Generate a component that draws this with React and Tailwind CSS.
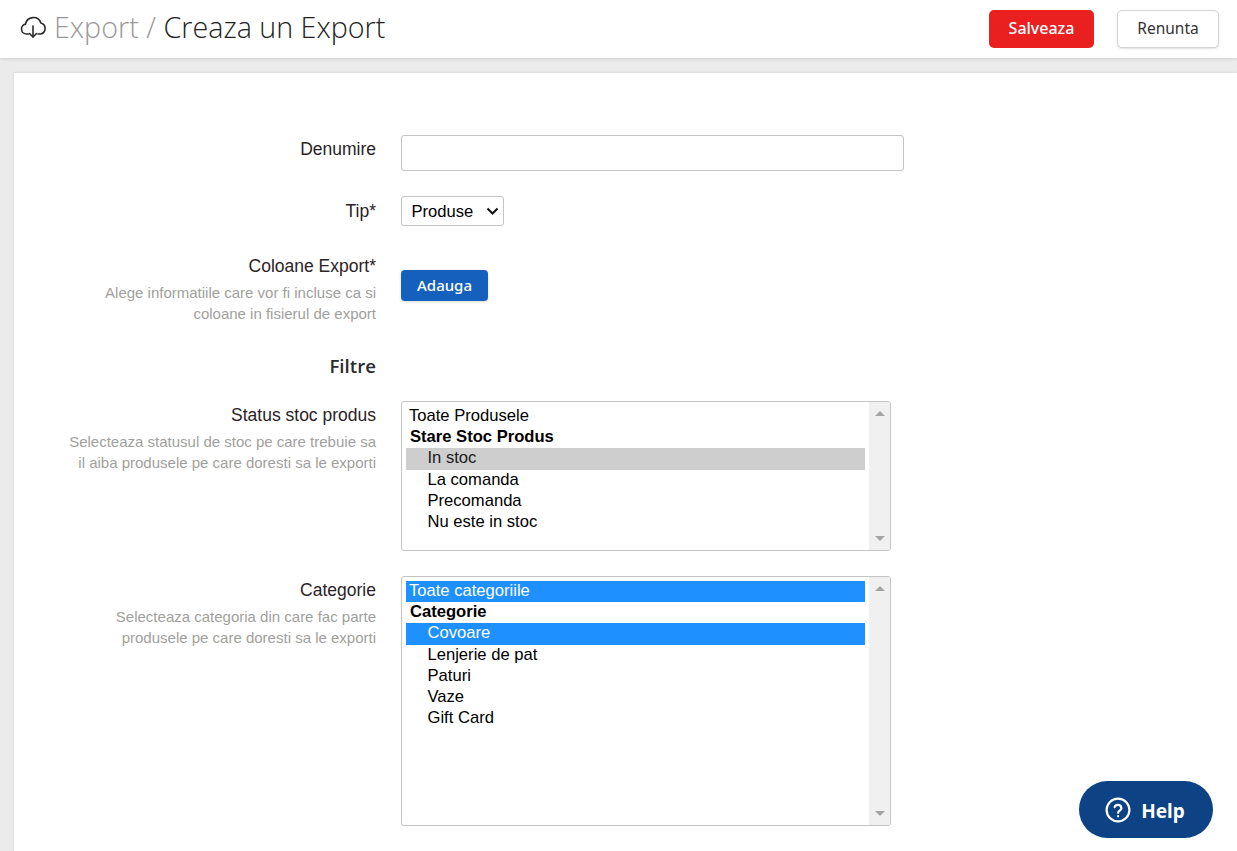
const arial = "font-['Liberation_Sans',Arial,sans-serif]";

const statusOptions = [
  { label: "Toate Produsele", type: "plain" },
  { label: "Stare Stoc Produs", type: "group" },
  { label: "In stoc", type: "child", state: "gray" },
  { label: "La comanda", type: "child" },
  { label: "Precomanda", type: "child" },
  { label: "Nu este in stoc", type: "child" },
];

const categoryOptions = [
  { label: "Toate categoriile", type: "plain", state: "blue" },
  { label: "Categorie", type: "group" },
  { label: "Covoare", type: "child", state: "blue" },
  { label: "Lenjerie de pat", type: "child" },
  { label: "Paturi", type: "child" },
  { label: "Vaze", type: "child" },
  { label: "Gift Card", type: "child" },
];

const ListOption = ({ option }) => {
  let color = "text-black";
  if (option.state === "gray") color = "bg-[#cecece] text-[#1a1a1a]";
  if (option.state === "blue") color = "bg-[#1e90ff] text-white";

  let indent = "pl-[3px]";
  if (option.type === "group") indent = "pl-1 font-bold";
  if (option.type === "child") indent = "pl-[21.5px]";

  return <div className={`h-[21.2px] leading-[20px] whitespace-nowrap ${indent} ${color}`}>{option.label}</div>;
};

const ListBox = ({ options, height }) => (
  <div className={`w-[490px] ${height} flex border border-[#c4c4c4] rounded-[3px] bg-white overflow-hidden ${arial} text-[16.6px]`}>
    <div className="flex-1 pl-1 pr-1 pt-[4px]">
      {options.map((option) => (
        <ListOption key={option.label} option={option} />
      ))}
    </div>
    <div className="w-[21px] bg-[#f0f0f0] flex flex-col items-center justify-between py-[9px]">
      <div className="w-0 h-0 border-x-[5px] border-x-transparent border-b-[5px] border-b-[#a3a3a3]"></div>
      <div className="w-0 h-0 border-x-[5px] border-x-transparent border-t-[5px] border-t-[#a3a3a3]"></div>
    </div>
  </div>
);

const Label = ({ title, hint, className = "" }) => (
  <div className={`w-[362px] shrink-0 text-right ${arial} ${className}`}>
    <div className="text-[17.5px] leading-[22px] text-[#2b2326]">{title}</div>
    {hint && (
      <div className="mt-[5px] text-[15px] leading-[21px] text-[#a19f9d]">
        {hint.map((line) => (
          <div key={line}>{line}</div>
        ))}
      </div>
    )}
  </div>
);

export default function App() {
  return (
    <div className="relative h-[851px] overflow-hidden bg-[#ebebeb]">
      <header className="h-[58px] bg-white shadow-[0_1px_3px_rgba(0,0,0,0.12)] flex items-center pl-[20px] pr-[18px]">
        <svg className="mb-[1px]" width="28" height="28" viewBox="0 0 28 28" fill="none" stroke="#2a2a2a" strokeWidth="1.6" strokeLinecap="round" strokeLinejoin="round">
          <path d="M8.5 19H6.5a5 5 0 0 1-1-9.9 8 8 0 0 1 15.4-1.2 5.7 5.7 0 0 1-.4 11.1H18" />
          <path d="M13 11v11" />
          <path d="M9.5 18.5l3.5 3.5 3.5-3.5" />
        </svg>
        <h1 className="ml-[6px] mb-1 font-['Open_Sans',sans-serif] font-light text-[28.7px] leading-none text-[#222]">
          <span className="text-[#999]">Export / </span>
          Creaza un Export
        </h1>
        <button className="ml-auto w-[105px] h-[38px] rounded-[5px] bg-[#ea1f1f] text-white font-['Noto_Sans',sans-serif] font-medium text-[16px] leading-[34px] pb-[2px]">
          Salveaza
        </button>
        <button className="ml-[23px] w-[102px] h-[38px] rounded-[5px] bg-white border border-[#d4d4d4] shadow-[0_1px_2px_rgba(0,0,0,0.12)] text-[#333] font-['Noto_Sans',sans-serif] text-[15.5px] leading-[34px] pb-[2px]">
          Renunta
        </button>
      </header>

      <main className="ml-[14px] mt-[15px] h-[800px] bg-white shadow-[0_0_3px_rgba(0,0,0,0.1)] pt-[62px]">
        <div className="flex gap-[25px]">
          <Label title="Denumire" className="pt-[3px]" />
          <input className="w-[503px] h-[36px] border border-[#c4c4c4] rounded-[3px] bg-white" />
        </div>

        <div className="flex gap-[25px] mt-[25px]">
          <Label title="Tip*" className="pt-[4px]" />
          <div className="relative w-[103px] h-[30px]">
            <select className={`w-full h-full appearance-none border border-[#c4c4c4] rounded-[3px] bg-white pl-[9.5px] pt-[3px] text-[16.6px] text-black ${arial}`}>
              <option>Produse</option>
            </select>
            <svg className="absolute right-[5px] top-[11px] pointer-events-none" width="13" height="9" viewBox="0 0 13 9" fill="none" stroke="#111" strokeWidth="2">
              <path d="M1.5 1.5l5 5 5-5" />
            </svg>
          </div>
        </div>

        <div className="flex gap-[25px] mt-[29px]">
          <Label title="Coloane Export*" hint={["Alege informatiile care vor fi incluse ca si", "coloane in fisierul de export"]} />
          <button className="mt-[15px] w-[87px] h-[31px] rounded-[4px] bg-[#1560bd] text-white font-['Noto_Sans',sans-serif] font-medium text-[15px] shadow-[0_1px_3px_rgba(0,0,0,0.15)]">
            Adauga
          </button>
        </div>

        <div className="w-[362px] mt-[29px] text-right font-['Open_Sans',sans-serif] font-semibold text-[18.7px] leading-[26px] text-[#2b2b2b]">Filtre</div>

        <div className="flex gap-[25px] mt-[22px]">
          <Label title="Status stoc produs" className="pt-[3px]" hint={["Selecteaza statusul de stoc pe care trebuie sa", "il aiba produsele pe care doresti sa le exporti"]} />
          <ListBox options={statusOptions} height="h-[150px]" />
        </div>

        <div className="flex gap-[25px] mt-[25px]">
          <Label title="Categorie" className="pt-[3px]" hint={["Selecteaza categoria din care fac parte", "produsele pe care doresti sa le exporti"]} />
          <ListBox options={categoryOptions} height="h-[250px]" />
        </div>
      </main>

      <button className="absolute left-[1079px] top-[781px] w-[134px] h-[57px] rounded-full bg-[#0d4284] text-white flex items-center justify-center gap-[10px] pr-[2px] font-['Noto_Sans',sans-serif] font-bold text-[19px]">
        <svg width="26" height="26" viewBox="0 0 26 26" fill="none" stroke="white" strokeWidth="2.2" strokeLinecap="round">
          <circle cx="13" cy="13" r="11.4" />
          <path d="M9.6 10.2a3.5 3.5 0 0 1 6.8 1c0 2.3-3.3 2.6-3.3 4.6" />
          <path d="M13.1 19.2v.1" />
        </svg>
        <span className="mt-[3px]">Help</span>
      </button>
    </div>
  );
}
